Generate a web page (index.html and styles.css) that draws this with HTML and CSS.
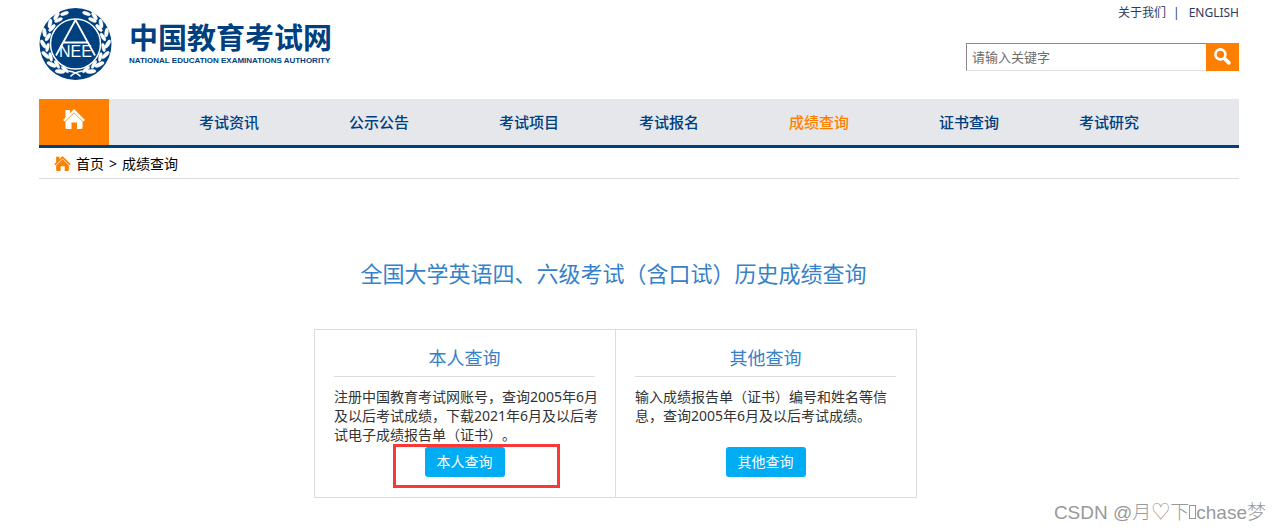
FILE: index.html
```html
<!DOCTYPE html>
<html lang="zh-CN">
<head>
  <meta charset="UTF-8">
  <meta name="viewport" content="width=device-width, initial-scale=1.0">
  <title>成绩查询 - 中国教育考试网</title>
  <link rel="stylesheet" href="styles.css">
</head>
<body>
  <svg width="0" height="0" class="defs">
    <symbol id="house" viewBox="0 0 22 20">
      <path d="M2.500 1H7v4L2.500 9z"/>
      <path d="M11 0 22 11l-1.800 1.400L11 3.400 1.800 12.400 0 11z"/>
      <path d="M11 4.200 19.500 12.500V18.500q0 1.500-1.500 1.500h-4v-6.500H8.500V20H4q-1.500 0-1.500-1.500v-6z"/>
    </symbol>
    <symbol id="leaves" viewBox="0 0 72 72">
      <g>
        <ellipse cx="25" cy="5.500" rx="4.200" ry="1.700" transform="rotate(-18 25 5.500)"/>
        <ellipse cx="17" cy="8" rx="1.800" ry="4.500" transform="rotate(32 17 8)"/>
        <ellipse cx="19" cy="12" rx="4.300" ry="1.700" transform="rotate(-24 19 12)"/>
        <ellipse cx="10.500" cy="15.500" rx="1.800" ry="4.600" transform="rotate(10 10.500 15.500)"/>
        <ellipse cx="12.500" cy="20" rx="4.500" ry="1.700" transform="rotate(-48 12.500 20)"/>
        <ellipse cx="5" cy="24.500" rx="1.800" ry="4.600" transform="rotate(-8 5 24.500)"/>
        <ellipse cx="8.500" cy="29" rx="4.500" ry="1.700" transform="rotate(-58 8.500 29)"/>
        <ellipse cx="3.700" cy="36" rx="1.800" ry="4.600" transform="rotate(-30 3.700 36)"/>
        <ellipse cx="8" cy="39.500" rx="4.400" ry="1.600" transform="rotate(-78 8 39.500)"/>
        <ellipse cx="6" cy="47" rx="1.800" ry="4.800" transform="rotate(-46 6 47)"/>
        <ellipse cx="11.200" cy="49" rx="1.600" ry="4.500" transform="rotate(-12 11.200 49)"/>
        <ellipse cx="12" cy="56.500" rx="1.900" ry="5" transform="rotate(-64 12 56.500)"/>
        <ellipse cx="17.500" cy="56.500" rx="1.600" ry="4.500" transform="rotate(-30 17.500 56.500)"/>
        <ellipse cx="20.500" cy="63.500" rx="1.900" ry="5" transform="rotate(-84 20.500 63.500)"/>
        <ellipse cx="25.500" cy="61.500" rx="1.600" ry="4.500" transform="rotate(-50 25.500 61.500)"/>
      </g>
    </symbol>
  </svg>

  <div class="page">
    <header class="header">
      <a class="brand" href="#">
        <svg class="emblem" viewBox="0 0 72 72" aria-hidden="true">
          <circle cx="36" cy="36" r="36" fill="#00407f"/>
          <g fill="#fff" stroke="#fff" stroke-width=".4">
            <use href="#leaves" width="72" height="72"/>
            <use href="#leaves" width="72" height="72" transform="translate(72 0) scale(-1 1)"/>
          </g>
          <path d="M29 63q8 1 12 5.500M43 63q-8 1-12 5.500" fill="none" stroke="#fff" stroke-width="1.500"/>
          <circle cx="36" cy="36" r="25" fill="#00407f" stroke="#fff" stroke-width="1.500"/>
          <path d="M36 12 16.500 47.500M36 12l19.500 35.500M24 34.500h24" fill="none" stroke="#fff" stroke-width="1.800"/>
          <text class="emblem-text" x="36" y="48.500" text-anchor="middle" fill="#fff">NEE</text>
        </svg>
        <span class="brand-names">
          <span class="brand-cn">中国教育考试网</span>
          <span class="brand-en">NATIONAL EDUCATION EXAMINATIONS AUTHORITY</span>
        </span>
      </a>
      <div class="tools">
        <div class="top-links">
          <a href="#">关于我们</a><span class="sep">|</span><a href="#">ENGLISH</a>
        </div>
        <form class="search">
          <input type="text" placeholder="请输入关键字" aria-label="请输入关键字">
          <button type="button" aria-label="搜索">
            <svg viewBox="0 0 16 16" width="17" height="17" fill="none" stroke="#fff">
              <circle cx="6" cy="6" r="4.700" stroke-width="2.400"/>
              <path d="m9.800 9.800 4.200 4.200" stroke-width="3.400" stroke-linecap="round"/>
            </svg>
          </button>
        </form>
      </div>
    </header>

    <nav class="nav">
      <a class="nav-home" href="#" aria-label="首页"><svg width="22" height="20"><use href="#house"/></svg></a>
      <div class="nav-items">
        <a href="#">考试资讯</a>
        <a href="#">公示公告</a>
        <a href="#">考试项目</a>
        <a href="#">考试报名</a>
        <a href="#" class="active">成绩查询</a>
        <a href="#">证书查询</a>
        <a href="#">考试研究</a>
      </div>
    </nav>

    <div class="crumbs">
      <svg width="17" height="15"><use href="#house"/></svg>
      <a href="#">首页</a>
      <span>&gt;</span>
      <a href="#">成绩查询</a>
    </div>

    <main class="main">
      <h1>全国大学英语四、六级考试（含口试）历史成绩查询</h1>
      <div class="cards">
        <section class="card">
          <h2>本人查询</h2>
          <p>注册中国教育考试网账号，查询2005年6月及以后考试成绩，下载2021年6月及以后考试电子成绩报告单（证书）。</p>
          <button type="button">本人查询</button>
          <span class="marker"></span>
        </section>
        <section class="card">
          <h2>其他查询</h2>
          <p>输入成绩报告单（证书）编号和姓名等信息，查询2005年6月及以后考试成绩。</p>
          <button type="button">其他查询</button>
        </section>
      </div>
    </main>
  </div>
  <div class="watermark">CSDN @月♡下<span class="missing"></span>chase梦</div>
</body>
</html>
```

FILE: styles.css
```css
:root {
  --navy: #00407f;
  --orange: #ff8000;
  --blue: #3681c8;
  --line: #dcdcdc;
}
* { box-sizing: border-box; }
body {
  margin: 0;
  background: #fff;
  color: #333;
  font-family: "Noto Sans", "Noto Sans CJK SC", sans-serif;
  font-size: 14px;
  text-spacing-trim: space-all;
}
a {
  color: inherit;
  text-decoration: none;
}
button, input {
  font-family: inherit;
}
.defs {
  position: absolute;
}
.page {
  margin: 0 42px 0 39px;
}

/* header */
.header {
  display: flex;
  justify-content: space-between;
  padding-top: 8px;
  height: 99px;
}
.brand {
  display: flex;
  gap: 17px;
  height: 72px;
  color: var(--navy);
}
.emblem {
  width: 73px;
  height: 72px;
}
.emblem-text {
  font-family: "Liberation Sans", sans-serif;
  font-size: 16px;
}
.brand-names {
  display: flex;
  flex-direction: column;
  padding-top: 11px;
}
.brand-cn {
  font-size: 29px;
  font-weight: 700;
  line-height: 37px;
}
.brand-en {
  font-family: "Liberation Sans", sans-serif;
  font-size: 8px;
  font-weight: 700;
  line-height: 10px;
}
.tools {
  display: flex;
  flex-direction: column;
  align-items: flex-end;
  gap: 25px;
}
.top-links {
  display: flex;
  gap: 7px;
  font-size: 12px;
  line-height: 10px;
  color: #2b3a5e;
}
.sep {
  margin-right: 2px;
}
.search {
  display: flex;
  height: 28px;
}
.search input {
  width: 240px;
  padding: 0 5px;
  border: 1px solid #e0e0e0;
  border-top-color: #8a8a8a;
  border-left-color: #8a8a8a;
  border-right: 0;
  font-size: 13px;
  outline: 0;
}
.search input::placeholder {
  color: #6d6d6d;
}
.search button {
  width: 33px;
  padding: 3px 0 0;
  border: 0;
  background: var(--orange);
}

/* navigation */
.nav {
  display: flex;
  height: 49px;
  background: #e6e7eb;
  border-bottom: 3px solid var(--navy);
}
.nav-home {
  display: flex;
  justify-content: center;
  padding-top: 10px;
  width: 70px;
  background: var(--orange);
  fill: #fff;
}
.nav-items {
  flex: 1;
  display: grid;
  grid-template-columns: 15fr 15fr 14fr 15fr 15fr 14fr 16fr;
  padding-left: 90px;
  color: var(--navy);
  font-family: "Noto Sans CJK SC", sans-serif;
  font-size: 15px;
  font-weight: 500;
  line-height: 45px;
}
.nav-items .active {
  color: var(--orange);
}
.crumbs {
  display: flex;
  align-items: center;
  gap: 5px;
  height: 31px;
  padding-left: 15px;
  border-bottom: 1px solid var(--line);
  color: #000;
}
.crumbs svg {
  fill: var(--orange);
}

/* query panels */
.main {
  width: 603px;
  margin: 78px 0 0 275px;
}
h1, h2 {
  margin: 0;
  color: var(--blue);
  font-weight: 400;
}
h1 {
  padding-right: 4px;
  font-size: 22px;
  line-height: 32px;
  text-align: center;
}
.cards {
  display: grid;
  grid-template-columns: 300px 1fr;
  margin-top: 40px;
  border: 1px solid var(--line);
}
.card {
  position: relative;
  display: flex;
  flex-direction: column;
  padding: 14px 10px 20px 19px;
}
.card + .card {
  border-left: 1px solid var(--line);
}
.card h2 {
  margin-right: 10px;
  padding-bottom: 4px;
  border-bottom: 1px solid var(--line);
  font-size: 18px;
  line-height: 28px;
  text-align: center;
}
.card p {
  margin: 10px 0 3px;
  min-height: 57px;
  line-height: 19px;
}
.card button {
  align-self: center;
  width: 80px;
  height: 30px;
  margin-right: 10px;
  padding: 0 0 2px;
  border: 0;
  border-radius: 3px;
  background: #00adf2;
  color: #fff;
  font-size: 14px;
}
.marker {
  position: absolute;
  left: 78px;
  bottom: 9px;
  width: 167px;
  height: 44px;
  border: 3px solid #f93838;
}
.watermark {
  position: absolute;
  right: 15px;
  bottom: 5px;
  color: #999;
  font-family: "Liberation Sans", "Noto Sans CJK SC", sans-serif;
  font-size: 19px;
  font-weight: 300;
  line-height: 28px;
}
.missing {
  display: inline-block;
  width: 7px;
  height: 14px;
  border: 1px solid #999;
}
```
